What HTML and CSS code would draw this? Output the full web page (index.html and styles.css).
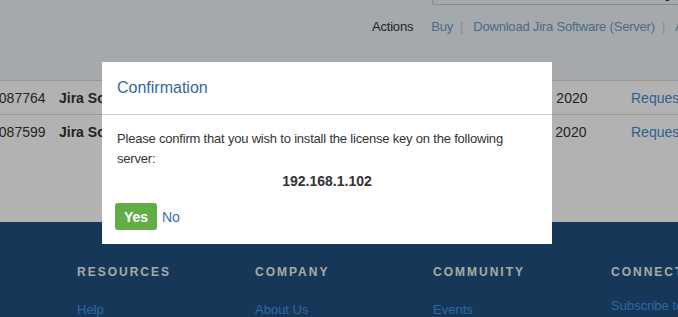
FILE: index.html
```
<!DOCTYPE html>
<html lang="en">
<head>
    <meta charset="UTF-8">
    <meta name="viewport" content="width=device-width, initial-scale=1.0">
    <title>Licenses</title>
    <link rel="stylesheet" href="styles.css">
</head>
<body>

    <div class="top">
        <div class="keyBox">
            <span>Server ID: BXJG-P5KL-9ZTM-4NQR</span>
        </div>
        <div class="actions">
            <span class="actionsLabel">Actions</span>
            <a href="#">Buy</a>
            <span class="pipe">|</span>
            <a href="#">Download Jira Software (Server)</a>
            <span class="pipe">|</span>
            <a href="#">Archive</a>
        </div>
    </div>

    <div class="rows">
        <div class="row">
            <span class="cellId">SEN-L15087764</span>
            <span class="cellName">Jira Software (Server)</span>
            <span class="cellDate">Mar 14, 2020</span>
            <a class="cellLink" href="#">Request</a>
        </div>
        <div class="row">
            <span class="cellId">SEN-L15087599</span>
            <span class="cellName">Jira Software (Server)</span>
            <span class="cellDate">Mar 11, 2020</span>
            <a class="cellLink" href="#">Request</a>
        </div>
    </div>

    <footer>
        <div class="footCol">
            <h4>Resources</h4>
            <a href="#">Help</a>
        </div>
        <div class="footCol">
            <h4>Company</h4>
            <a href="#">About Us</a>
        </div>
        <div class="footCol">
            <h4>Community</h4>
            <a href="#">Events</a>
        </div>
        <div class="footCol">
            <h4>Connect</h4>
            <a class="subscribe" href="#">Subscribe to our newsletter</a>
        </div>
    </footer>

    <!-- dim layer behind the dialog -->
    <div class="overlay"></div>

    <div class="modal">
        <div class="modalHeader">Confirmation</div>
        <div class="modalBody">
            <p>Please confirm that you wish to install the license key on the following server:</p>
            <p class="server">192.168.1.102</p>
            <div class="buttons">
                <button class="yes">Yes</button>
                <a class="no" href="#">No</a>
            </div>
        </div>
    </div>

</body>
</html>
```

FILE: styles.css
```
body {
    font-family: "Liberation Sans", Arial, sans-serif;
    font-size: 14px;
    color: #333;
    margin: 0;
    padding: 0;
    background-color: #fff;
    overflow: hidden;
}

a {
    text-decoration: none;
}

.top {
    display: flow-root;
    background-color: #eef3f7;
    height: 80px;
    border-bottom: 1px solid #dcdcdc;
}

.keyBox {
    margin-left: 432px;
    margin-top: -15px;
    height: 18px;
    border: 1px solid #c8c8c8;
    border-right: none;
    border-radius: 3px 0 0 3px;
    overflow: hidden;
    padding-left: 30px;
    line-height: 15px;
    font-size: 13px;
    font-weight: bold;
    white-space: nowrap;
}

.actions {
    display: flex;
    align-items: center;
    margin-top: 14px;
    margin-left: 372px;
    font-size: 13px;
    letter-spacing: -0.2px;
    white-space: nowrap;
}

.actionsLabel {
    margin-right: 18px;
}

.actions a {
    color: #6a99cb;
}

.pipe {
    color: #c4c8cc;
    margin: 0 10px 0 7px;
}

.row {
    display: flex;
    align-items: center;
    height: 33px;
    border-bottom: 1px solid #dcdcdc;
    white-space: nowrap;
    overflow: hidden;
}

.row:last-child {
    border-bottom: none;
}

.cellId {
    width: 117px;
    margin-left: -58px;
    flex-shrink: 0;
}

.cellName {
    font-weight: bold;
    width: 446px;
    flex-shrink: 0;
}

.cellDate {
    width: 126px;
    flex-shrink: 0;
}

.cellLink {
    color: #4a8ad0;
}

footer {
    position: absolute;
    top: 222px;
    left: 0;
    right: 0;
    height: 120px;
    background-color: #21507f;
    display: flex;
    padding-left: 77px;
    padding-top: 42px;
    box-sizing: border-box;
}

.footCol {
    width: 178px;
    flex-shrink: 0;
    white-space: nowrap;
}

.footCol h4 {
    margin: 0 0 21px 0;
    font-size: 12px;
    letter-spacing: 2px;
    text-transform: uppercase;
    color: #f0f0f0;
    line-height: 16px;
}

.footCol a {
    color: #4096e4;
    font-size: 13px;
}

.footCol .subscribe {
    position: relative;
    top: -4px;
}

.overlay {
    position: fixed;
    top: 0;
    left: 0;
    right: 0;
    bottom: 0;
    background-color: rgba(0, 0, 0, 0.3);
}

.modal {
    position: fixed;
    left: 102px;
    top: 62px;
    width: 450px;
    height: 182px;
    background-color: #fff;
}

.modalHeader {
    height: 52px;
    line-height: 52px;
    padding-left: 15px;
    font-size: 16px;
    color: #34689e;
    border-bottom: 1px solid #ccc;
}

.modalBody {
    padding: 14px 15px 0 15px;
    font-size: 13px;
    letter-spacing: -0.2px;
}

.modalBody p {
    margin: 0;
    line-height: 20px;
}

.server {
    text-align: center;
    font-weight: bold;
    font-size: 14px;
    letter-spacing: 0;
    margin-top: 2px !important;
}

.buttons {
    display: flex;
    align-items: center;
    margin-top: 12px;
    margin-left: -2px;
}

.yes {
    background-color: #63ad47;
    color: white;
    font-family: inherit;
    font-weight: bold;
    font-size: 14px;
    border: none;
    border-radius: 3px;
    width: 42px;
    height: 27px;
    padding: 0;
}

.no {
    color: #3572b0;
    margin-left: 5px;
    font-size: 14px;
    letter-spacing: 0;
}
```
